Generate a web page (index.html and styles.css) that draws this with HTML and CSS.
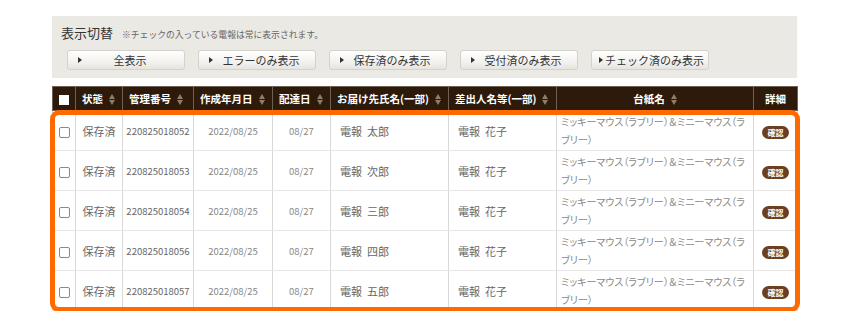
FILE: index.html
```html
<!DOCTYPE html>
<html lang="ja">
<head>
<meta charset="utf-8">
<link rel="stylesheet" href="styles.css">
</head>
<body>
<div class="page">
  <div class="filter">
    <div class="filter-head">
      <span class="filter-title">表示切替</span>
      <span class="filter-note">※チェックの入っている電報は常に表示されます。</span>
    </div>
    <div class="filter-buttons">
      <button class="fbtn"><span class="tri"></span><span class="fbtn-label">全表示</span></button>
      <button class="fbtn"><span class="tri"></span><span class="fbtn-label">エラーのみ表示</span></button>
      <button class="fbtn"><span class="tri"></span><span class="fbtn-label">保存済のみ表示</span></button>
      <button class="fbtn"><span class="tri"></span><span class="fbtn-label">受付済のみ表示</span></button>
      <button class="fbtn fbtn-tight"><span class="tri"></span><span class="fbtn-label">チェック済のみ表示</span></button>
    </div>
  </div>

  <div class="table-wrap">
    <table class="list">
      <colgroup>
        <col style="width:23px"><col style="width:47px"><col style="width:71px"><col style="width:79px"><col style="width:58px"><col style="width:118px"><col style="width:108px"><col style="width:197px"><col style="width:44px">
      </colgroup>
      <thead>
        <tr>
          <th class="c-chk"><span class="hbox"></span></th>
          <th class="left">状態<span class="sort"></span></th>
          <th class="left">管理番号<span class="sort"></span></th>
          <th class="left">作成年月日<span class="sort"></span></th>
          <th class="left">配達日<span class="sort"></span></th>
          <th class="left">お届け先氏名(一部)<span class="sort"></span></th>
          <th class="left">差出人名等(一部)<span class="sort"></span></th>
          <th class="center">台紙名<span class="sort"></span></th>
          <th class="center">詳細</th>
        </tr>
      </thead>
      <tbody>
        <tr>
          <td class="c-chk"><span class="cbox"></span></td>
          <td class="center">保存済</td>
          <td class="center num">220825018052</td>
          <td class="center date">2022/08/25</td>
          <td class="center date">08/27</td>
          <td class="name">電報&nbsp;&nbsp;太郎</td>
          <td class="name">電報&nbsp;&nbsp;花子</td>
          <td class="daishi">ミッキーマウス（ラブリー）＆ミニーマウス（ラブリー）</td>
          <td class="center"><span class="confirm">確認</span></td>
        </tr>
        <tr>
          <td class="c-chk"><span class="cbox"></span></td>
          <td class="center">保存済</td>
          <td class="center num">220825018053</td>
          <td class="center date">2022/08/25</td>
          <td class="center date">08/27</td>
          <td class="name">電報&nbsp;&nbsp;次郎</td>
          <td class="name">電報&nbsp;&nbsp;花子</td>
          <td class="daishi">ミッキーマウス（ラブリー）＆ミニーマウス（ラブリー）</td>
          <td class="center"><span class="confirm">確認</span></td>
        </tr>
        <tr>
          <td class="c-chk"><span class="cbox"></span></td>
          <td class="center">保存済</td>
          <td class="center num">220825018054</td>
          <td class="center date">2022/08/25</td>
          <td class="center date">08/27</td>
          <td class="name">電報&nbsp;&nbsp;三郎</td>
          <td class="name">電報&nbsp;&nbsp;花子</td>
          <td class="daishi">ミッキーマウス（ラブリー）＆ミニーマウス（ラブリー）</td>
          <td class="center"><span class="confirm">確認</span></td>
        </tr>
        <tr>
          <td class="c-chk"><span class="cbox"></span></td>
          <td class="center">保存済</td>
          <td class="center num">220825018056</td>
          <td class="center date">2022/08/25</td>
          <td class="center date">08/27</td>
          <td class="name">電報&nbsp;&nbsp;四郎</td>
          <td class="name">電報&nbsp;&nbsp;花子</td>
          <td class="daishi">ミッキーマウス（ラブリー）＆ミニーマウス（ラブリー）</td>
          <td class="center"><span class="confirm">確認</span></td>
        </tr>
        <tr>
          <td class="c-chk"><span class="cbox"></span></td>
          <td class="center">保存済</td>
          <td class="center num">220825018057</td>
          <td class="center date">2022/08/25</td>
          <td class="center date">08/27</td>
          <td class="name">電報&nbsp;&nbsp;五郎</td>
          <td class="name">電報&nbsp;&nbsp;花子</td>
          <td class="daishi">ミッキーマウス（ラブリー）＆ミニーマウス（ラブリー）</td>
          <td class="center"><span class="confirm">確認</span></td>
        </tr>
      </tbody>
    </table>
    <div class="highlight"></div>
  </div>
</div>
</body>
</html>
```

FILE: styles.css
```css
* { box-sizing: border-box; }
html, body { margin: 0; padding: 0; background: #fff; }
body {
  font-family: "Noto Sans CJK JP", "Noto Sans", sans-serif;
  color: #555;
}
.page {
  width: 745px;
  margin-left: 52px;
  padding-top: 16px;
}
.filter {
  background: #ebe9e4;
  height: 62px;
  padding: 8px 0 0 9px;
}
.filter-head {
  display: flex;
  align-items: baseline;
  gap: 9px;
  height: 18px;
}
.filter-title {
  font-size: 13px;
  color: #333;
  line-height: 18px;
}
.filter-note {
  font-size: 8.8px;
  color: #666;
}
.filter-buttons {
  display: flex;
  gap: 13px;
  margin-top: 8px;
  padding-left: 6px;
}
.fbtn {
  width: 118px;
  height: 20px;
  border: 1px solid #d4d2cc;
  border-radius: 3px;
  background: linear-gradient(#ffffff, #f3f2ef 60%, #e6e4df);
  display: flex;
  align-items: center;
  padding: 0 0 0 10px;
  font-family: inherit;
  font-size: 11px;
  color: #333;
  white-space: nowrap;
  cursor: pointer;
}
.tri {
  width: 0; height: 0;
  border-left: 4px solid #333;
  border-top: 3px solid transparent;
  border-bottom: 3px solid transparent;
  flex: none;
}
.fbtn-label {
  flex: 1;
  text-align: center;
  padding-right: 6px;
}
.fbtn-tight { padding-left: 7px; }
.fbtn-tight .fbtn-label { text-align: left; padding-left: 2px; padding-right: 0; }

.table-wrap {
  position: relative;
  margin-top: 8px;
}
.list {
  width: 745px;
  border-collapse: collapse;
  table-layout: fixed;
}
.list th {
  background: #2d1a0b;
  color: #fff;
  font-size: 10.5px;
  font-weight: bold;
  height: 24px;
  padding: 0 0 0 6px;
  border: 1px solid #6e6153;
  white-space: nowrap;
  text-align: left;
}
.list th.center { text-align: center; padding-left: 0; }
.list th.c-chk { text-align: center; padding: 0; }
.sort {
  display: inline-flex;
  flex-direction: column;
  gap: 1px;
  margin-left: 6px;
  vertical-align: middle;
  margin-top: -2px;
}
.sort::before {
  content: "";
  border-left: 3.5px solid transparent;
  border-right: 3.5px solid transparent;
  border-bottom: 5px solid #8d7e66;
}
.sort::after {
  content: "";
  border-left: 3.5px solid transparent;
  border-right: 3.5px solid transparent;
  border-top: 5px solid #8d7e66;
}
.hbox {
  display: inline-block;
  width: 10px; height: 10px;
  background: #fff;
  vertical-align: middle;
}
.list td {
  height: 40px;
  border: 1px solid #d8d8d8;
  border-top-color: #e6e6e6;
  border-bottom-color: #e6e6e6;
  font-size: 11px;
  color: #666;
  padding: 0;
  vertical-align: middle;
}
.list td.center { text-align: center; }
.list td.c-chk { text-align: center; }
.list td.num { font-size: 9.5px; color: #666; }
.list td.date { font-size: 9.5px; color: #888; }
.list td.name { padding-left: 9px; font-size: 11px; color: #666; }
.list td.daishi {
  padding: 0 3px 0 4px;
  font-size: 10px;
  line-height: 18px;
  color: #8a8a8a;
  font-feature-settings: "palt";
}
.cbox {
  display: inline-block;
  width: 11px; height: 11px;
  border: 1px solid #888;
  border-radius: 2px;
  background: #fff;
  vertical-align: middle;
}
.confirm {
  display: inline-block;
  width: 27px;
  height: 13px;
  line-height: 13px;
  border-radius: 7px;
  background: #6b3f1f;
  color: #fff;
  font-size: 8px;
  font-weight: bold;
  text-align: center;
  vertical-align: middle;
}
.highlight {
  position: absolute;
  left: -2px;
  right: -3px;
  top: 24px;
  height: 202px;
  border: 5px solid #ff6a00;
  border-radius: 9px;
  pointer-events: none;
}
```
